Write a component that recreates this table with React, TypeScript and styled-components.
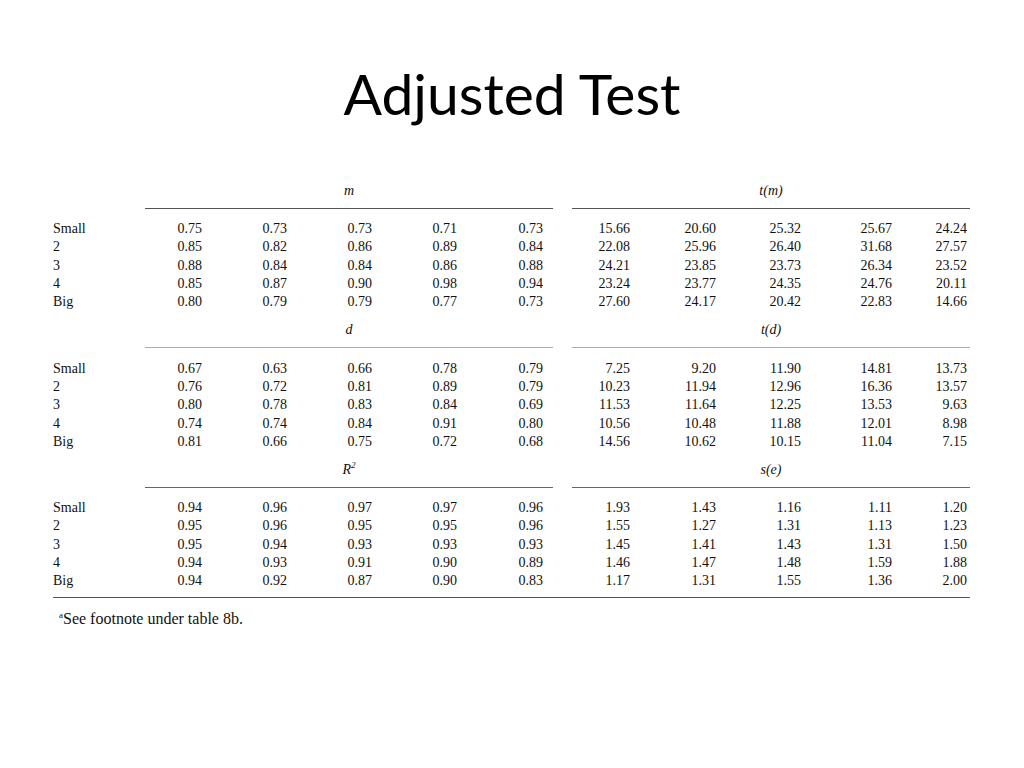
import React from 'react';
import styled, { createGlobalStyle } from 'styled-components';

const GlobalStyle = createGlobalStyle`
  html, body {
    margin: 0;
    padding: 0;
    background: #ffffff;
  }
`;

const Slide = styled.div`
  width: 1024px;
  height: 768px;
  background: #ffffff;
  overflow: hidden;
`;

const Title = styled.h1`
  margin: 0;
  padding-top: 63px;
  height: 172px;
  box-sizing: border-box;
  text-align: center;
  font-family: Lato, 'Open Sans', sans-serif;
  font-weight: 400;
  font-size: 57px;
  line-height: 60px;
  color: #000;
`;

const Table = styled.div`
  margin-left: 53px;
  width: 917px;
  font-family: 'Liberation Serif', 'Times New Roman', serif;
  color: #111;
`;

const GroupHeader = styled.div`
  display: grid;
  grid-template-columns: 92px 408px 19px 398px;
  padding-top: 10px;
`;

const HeaderCell = styled.div<{ $col: number; $line: string }>`
  grid-column: ${p => p.$col};
  height: 18px;
  text-align: center;
  font-style: italic;
  font-size: 14px;
  line-height: 18px;
  padding-bottom: 8px;
  border-bottom: 1px solid ${p => p.$line};
`;

const Sup = styled.sup`
  font-size: 9px;
  line-height: 0;
`;

const Rows = styled.div`
  margin-top: 11px;
`;

const Row = styled.div`
  display: grid;
  grid-template-columns: 92px 57px 85px 85px 85px 86px 87px 86px 85px 91px 75px;
  height: 18.3px;
  align-items: center;
  font-size: 14px;
  line-height: 18px;
`;

const Label = styled.div`
  text-align: left;
`;

const Value = styled.div`
  text-align: right;
`;

const BottomRule = styled.div`
  margin-top: 7px;
  width: 917px;
  border-top: 1px solid #555;
`;

const Footnote = styled.div`
  margin-top: 12px;
  margin-left: 6px;
  font-size: 16px;
  line-height: 18px;
`;

interface Group {
  left: React.ReactNode;
  right: React.ReactNode;
  line: string;
  rows: string[][];
}

const sizes = ['Small', '2', '3', '4', 'Big'];

const groups: Group[] = [
  {
    left: 'm',
    right: 't(m)',
    line: '#555',
    rows: [
      ['0.75', '0.73', '0.73', '0.71', '0.73', '15.66', '20.60', '25.32', '25.67', '24.24'],
      ['0.85', '0.82', '0.86', '0.89', '0.84', '22.08', '25.96', '26.40', '31.68', '27.57'],
      ['0.88', '0.84', '0.84', '0.86', '0.88', '24.21', '23.85', '23.73', '26.34', '23.52'],
      ['0.85', '0.87', '0.90', '0.98', '0.94', '23.24', '23.77', '24.35', '24.76', '20.11'],
      ['0.80', '0.79', '0.79', '0.77', '0.73', '27.60', '24.17', '20.42', '22.83', '14.66'],
    ],
  },
  {
    left: 'd',
    right: 't(d)',
    line: '#aaa',
    rows: [
      ['0.67', '0.63', '0.66', '0.78', '0.79', '7.25', '9.20', '11.90', '14.81', '13.73'],
      ['0.76', '0.72', '0.81', '0.89', '0.79', '10.23', '11.94', '12.96', '16.36', '13.57'],
      ['0.80', '0.78', '0.83', '0.84', '0.69', '11.53', '11.64', '12.25', '13.53', '9.63'],
      ['0.74', '0.74', '0.84', '0.91', '0.80', '10.56', '10.48', '11.88', '12.01', '8.98'],
      ['0.81', '0.66', '0.75', '0.72', '0.68', '14.56', '10.62', '10.15', '11.04', '7.15'],
    ],
  },
  {
    left: (
      <>
        R<Sup>2</Sup>
      </>
    ),
    right: 's(e)',
    line: '#666',
    rows: [
      ['0.94', '0.96', '0.97', '0.97', '0.96', '1.93', '1.43', '1.16', '1.11', '1.20'],
      ['0.95', '0.96', '0.95', '0.95', '0.96', '1.55', '1.27', '1.31', '1.13', '1.23'],
      ['0.95', '0.94', '0.93', '0.93', '0.93', '1.45', '1.41', '1.43', '1.31', '1.50'],
      ['0.94', '0.93', '0.91', '0.90', '0.89', '1.46', '1.47', '1.48', '1.59', '1.88'],
      ['0.94', '0.92', '0.87', '0.90', '0.83', '1.17', '1.31', '1.55', '1.36', '2.00'],
    ],
  },
];

const App: React.FC = () => {
  return (
    <>
      <GlobalStyle />
      <Slide>
        <Title>Adjusted Test</Title>
        <Table>
          {groups.map((group, gi) => (
            <div key={gi}>
              <GroupHeader>
                <HeaderCell $col={2} $line={group.line}>{group.left}</HeaderCell>
                <HeaderCell $col={4} $line={group.line}>{group.right}</HeaderCell>
              </GroupHeader>
              <Rows>
                {group.rows.map((values, ri) => (
                  <Row key={ri}>
                    <Label>{sizes[ri]}</Label>
                    {values.map((v, vi) => (
                      <Value key={vi}>{v}</Value>
                    ))}
                  </Row>
                ))}
              </Rows>
            </div>
          ))}
          <BottomRule />
          <Footnote>
            <Sup>a</Sup>See footnote under table 8b.
          </Footnote>
        </Table>
      </Slide>
    </>
  );
};

export default App;
